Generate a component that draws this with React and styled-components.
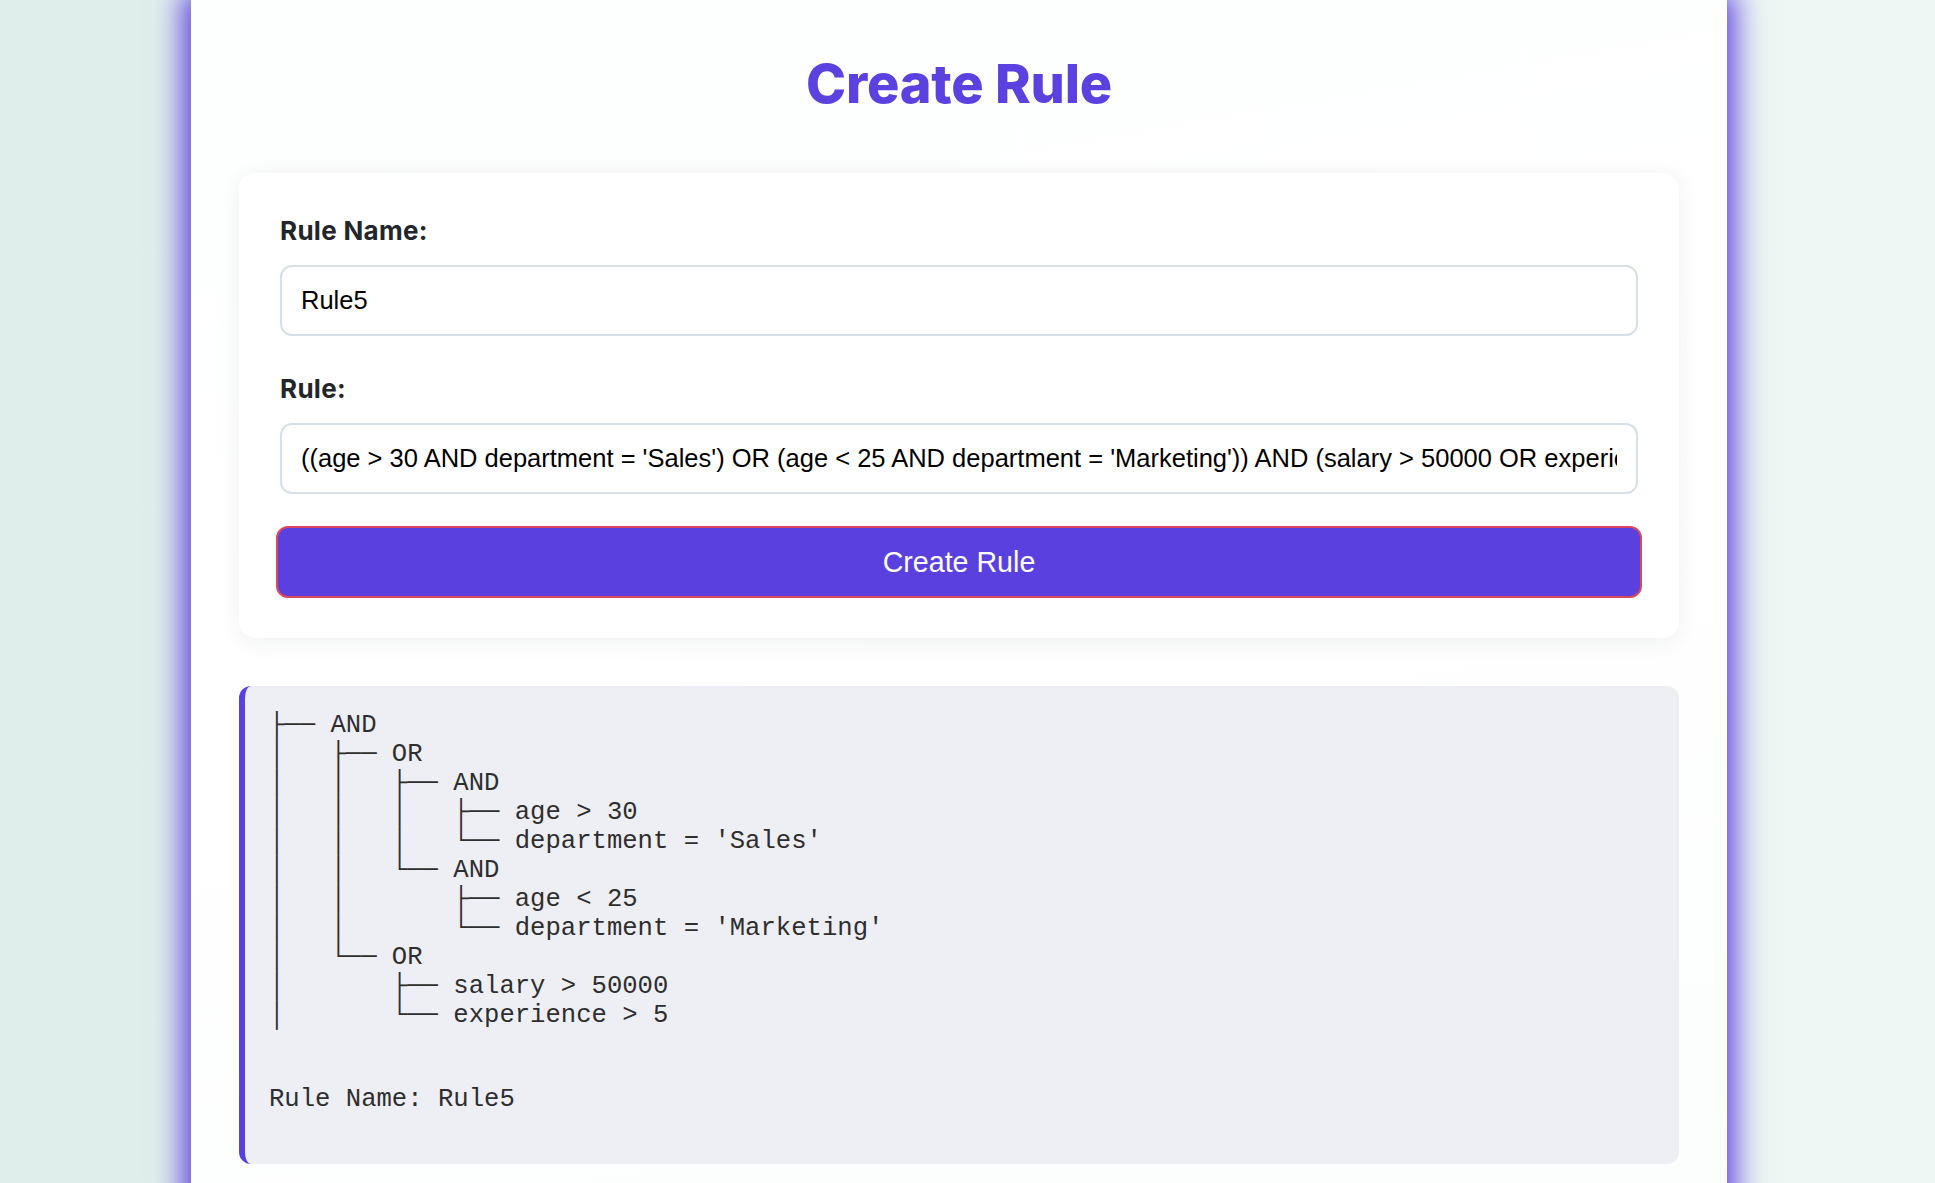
import React from 'react';
import styled, { createGlobalStyle } from 'styled-components';

const GlobalStyle = createGlobalStyle`
  *, *::before, *::after { box-sizing: border-box; }
  html, body { margin: 0; padding: 0; }
  body {
    min-height: 100vh;
    background: linear-gradient(90deg, #dfeeea 0%, #e5f1ee 50%, #eef7f4 100%);
    font-family: "Liberation Sans", Arial, sans-serif;
  }
`;

const Page = styled.div`
  width: calc(100% - 17px);
  min-height: 100vh;
  display: flex;
  justify-content: center;
`;

const Container = styled.main`
  width: 1536px;
  min-height: 100vh;
  background: linear-gradient(170deg, #fdfefe 0%, #ffffff 45%, #fcfdfd 100%);
  box-shadow: 0 0 28px 8px #5c41e1;
  padding: 52px 48px 48px;
  display: flex;
  flex-direction: column;
`;

const Title = styled.h1`
  margin: 0 0 57px;
  text-align: center;
  font-family: Inter, "Noto Sans", sans-serif;
  font-weight: 800;
  font-size: 54px;
  line-height: 64px;
  letter-spacing: -0.2px;
  color: #5c41e1;
`;

const Card = styled.form`
  background: #ffffff;
  border-radius: 16px;
  box-shadow: 0 4px 22px rgba(30, 40, 50, 0.07);
  padding: 40px 37px;
  display: flex;
  flex-direction: column;
`;

const Label = styled.label`
  display: block;
  margin: ${(p) => (p.$first ? '0' : '35px')} 4px 16px;
  font-family: Inter, "Noto Sans", sans-serif;
  font-weight: 700;
  font-size: 26px;
  line-height: 36px;
  letter-spacing: 0.3px;
  color: #22262b;
`;

const Input = styled.input`
  display: block;
  margin: 0 4px;
  width: calc(100% - 8px);
  height: 71px;
  padding: 0 19px;
  border: 2px solid #d7e0e6;
  border-radius: 12px;
  background: #fff;
  font-family: "Liberation Sans", Arial, sans-serif;
  font-size: 25.5px;
  color: #000;
  outline: none;
`;

const Button = styled.button`
  margin-top: 32px;
  width: 100%;
  height: 72px;
  border: 2px solid #d9485c;
  border-radius: 12px;
  background: #5b40e0;
  color: #ffffff;
  font-family: "Liberation Sans", Arial, sans-serif;
  font-size: 28.6px;
  cursor: pointer;
`;

const TreePanel = styled.section`
  margin-top: 48px;
  background: #eeeff5;
  border-left: 6px solid #5b40e0;
  border-radius: 12px;
  padding: 25px 24px 50px;
`;

const MonoText = styled.pre`
  margin: ${(p) => (p.$gap ? '55px 0 0' : '0')};
  font-family: "Liberation Mono", "Courier New", "DejaVu Sans Mono", monospace;
  font-size: 25.6px;
  line-height: 29px;
  color: #2e2e2e;
  white-space: pre;
`;

const treeLines = [
  '├── AND',
  '│   ├── OR',
  '│   │   ├── AND',
  '│   │   │   ├── age > 30',
  "│   │   │   └── department = 'Sales'",
  '│   │   └── AND',
  '│   │       ├── age < 25',
  "│   │       └── department = 'Marketing'",
  '│   └── OR',
  '│       ├── salary > 50000',
  '│       └── experience > 5',
];

export default function App() {
  return (
    <>
      <GlobalStyle />
      <Page>
        <Container>
          <Title>Create Rule</Title>
          <Card onSubmit={(e) => e.preventDefault()}>
            <Label $first htmlFor="ruleName">Rule Name:</Label>
            <Input id="ruleName" type="text" defaultValue="Rule5" />
            <Label htmlFor="ruleText">Rule:</Label>
            <Input
              id="ruleText"
              type="text"
              defaultValue="((age > 30 AND department = 'Sales') OR (age < 25 AND department = 'Marketing')) AND (salary > 50000 OR experience > 5)"
            />
            <Button type="submit">Create Rule</Button>
          </Card>
          <TreePanel>
            <MonoText>{treeLines.join('\n')}</MonoText>
            <MonoText $gap>Rule Name: Rule5</MonoText>
          </TreePanel>
        </Container>
      </Page>
    </>
  );
}
